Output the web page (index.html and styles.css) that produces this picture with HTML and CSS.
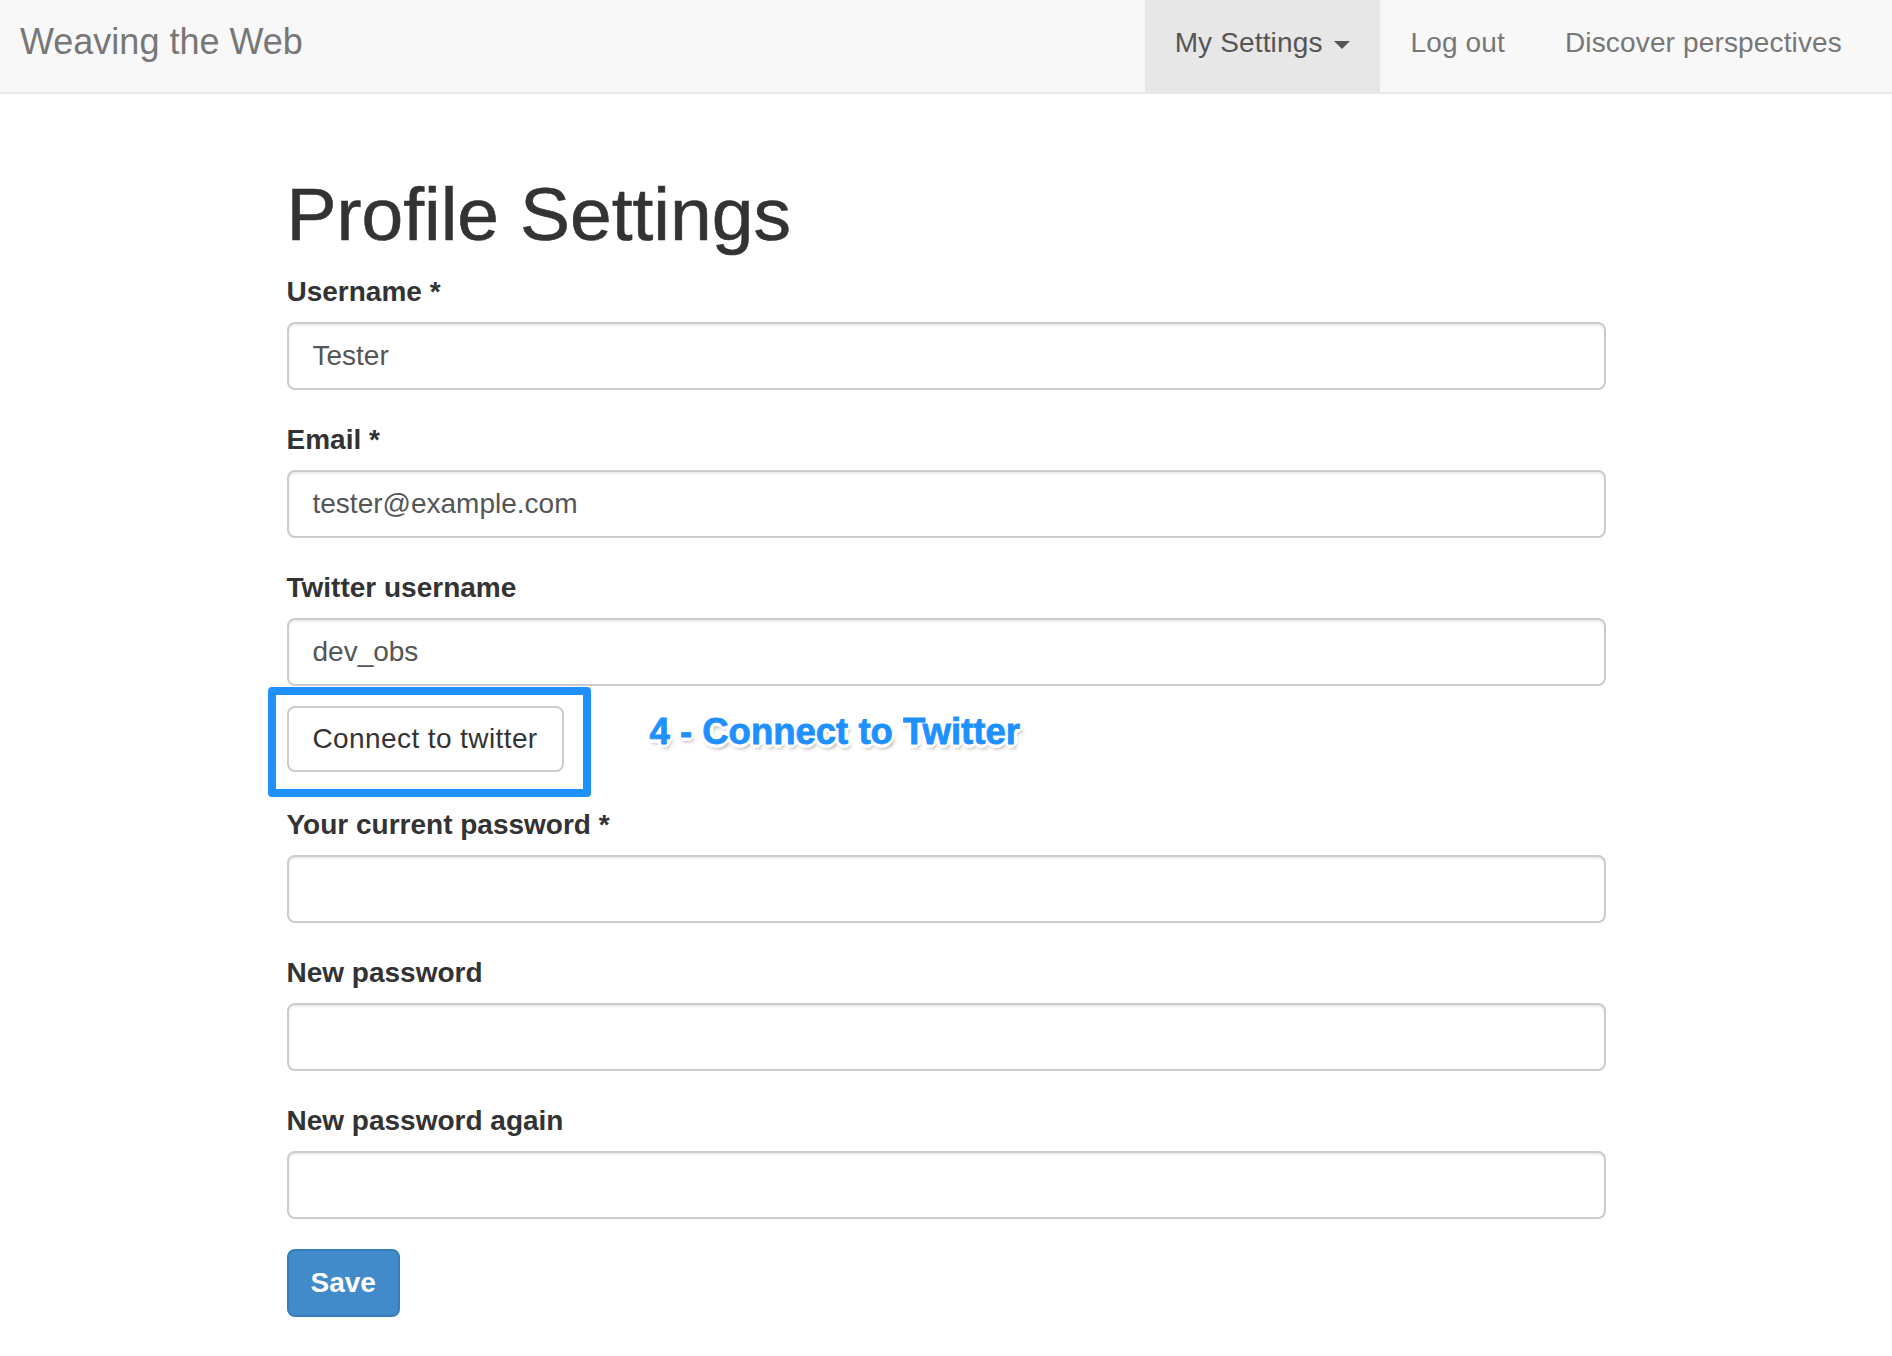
FILE: index.html
```html
<!DOCTYPE html>
<html lang="en">
<head>
<meta charset="utf-8">
<title>Profile Settings</title>
<link rel="stylesheet" href="styles.css">
</head>
<body>
<nav class="navbar">
  <a class="brand" href="#">Weaving the Web</a>
  <ul class="nav">
    <li class="active"><a href="#">My Settings <span class="caret"></span></a></li>
    <li><a href="#">Log out</a></li>
    <li><a href="#">Discover perspectives</a></li>
  </ul>
</nav>
<main class="container">
  <h1 class="title">Profile Settings</h1>
  <form class="form">
    <div class="form-group">
      <label class="label">Username *</label>
      <input class="form-control" type="text" value="Tester">
    </div>
    <div class="form-group">
      <label class="label">Email *</label>
      <input class="form-control" type="text" value="tester@example.com">
    </div>
    <div class="form-group">
      <label class="label">Twitter username</label>
      <input class="form-control" type="text" value="dev_obs">
      <div class="connect-row">
        <button type="button" class="btn btn-default">Connect to twitter</button>
        <div class="highlight"></div>
        <div class="annotation">4 - Connect to Twitter</div>
      </div>
    </div>
    <div class="form-group">
      <label class="label">Your current password *</label>
      <input class="form-control" type="password">
    </div>
    <div class="form-group">
      <label class="label">New password</label>
      <input class="form-control" type="password">
    </div>
    <div class="form-group">
      <label class="label">New password again</label>
      <input class="form-control" type="password">
    </div>
    <button type="button" class="btn btn-primary">Save</button>
  </form>
</main>
</body>
</html>
```
FILE: styles.css
```css
* { box-sizing: border-box; }

body {
  margin: 0;
  font-family: "Liberation Sans", Arial, Helvetica, sans-serif;
  color: #333;
  background: #fff;
}

.navbar {
  display: flex;
  align-items: stretch;
  justify-content: space-between;
  height: 94px;
  background: #f8f8f8;
  border-bottom: 2px solid #e7e7e7;
  padding: 0 20px 0 20px;
}

.brand {
  display: flex;
  align-items: center;
  padding-bottom: 8px;
  font-size: 36px;
  color: #777;
  text-decoration: none;
}

.nav {
  display: flex;
  list-style: none;
  margin: 0;
  padding: 0;
}

.nav li a {
  display: block;
  height: 92px;
  padding: 23px 30px 29px;
  font-size: 28px;
  line-height: 40px;
  letter-spacing: 0.15px;
  color: #777;
  text-decoration: none;
}

.nav li.active a {
  background: #e7e7e7;
  color: #555;
}

.caret {
  display: inline-block;
  width: 0;
  height: 0;
  margin-left: 4px;
  vertical-align: middle;
  border-top: 8px solid #555;
  border-left: 8px solid transparent;
  border-right: 8px solid transparent;
}

.container {
  max-width: 1319px;
  margin: 0 auto;
  padding-top: 40px;
}

.title {
  margin: 40px 0 18px;
  font-size: 75px;
  font-weight: normal;
  line-height: 80px;
  color: #333;
  -webkit-text-stroke: 0.6px #333;
}

.form-group {
  margin-bottom: 30px;
}

.label {
  display: block;
  margin-bottom: 10px;
  font-size: 28px;
  line-height: 40px;
  font-weight: bold;
  color: #333;
}

.form-control {
  display: block;
  width: 100%;
  height: 68px;
  padding: 12px 24px;
  font-family: inherit;
  font-size: 28px;
  line-height: 40px;
  color: #555;
  background: #fff;
  border: 2px solid #ccc;
  border-radius: 8px;
  box-shadow: inset 0 2px 2px rgba(0, 0, 0, 0.075);
  outline: none;
}

.connect-row {
  position: relative;
  margin-top: 20px;
  padding-bottom: 3px;
}

.btn {
  display: inline-block;
  height: 68px;
  padding: 12px 24px;
  font-family: inherit;
  font-size: 28px;
  line-height: 40px;
  border: 2px solid transparent;
  border-radius: 8px;
  cursor: pointer;
}

.btn-default {
  background: #fff;
  border-color: #ccc;
  color: #333;
  height: 66px;
  padding: 11px 24px;
  letter-spacing: 0.4px;
}

.btn-primary {
  background: #428bca;
  border-color: #357ebd;
  color: #fff;
  font-weight: bold;
  padding: 12px 22px;
}

.highlight {
  position: absolute;
  left: -19px;
  top: -19px;
  width: 323px;
  height: 110px;
  border: 8px solid #1e90ff;
  border-radius: 4px;
  pointer-events: none;
}

.annotation {
  position: absolute;
  left: 363px;
  top: 6px;
  font-size: 36.5px;
  line-height: 40px;
  font-weight: bold;
  color: #1e90ff;
  white-space: nowrap;
  -webkit-text-stroke: 0.8px #1e90ff;
  text-shadow:
    3px 0 0 #fff, -3px 0 0 #fff, 0 3px 0 #fff, 0 -3px 0 #fff,
    2px 2px 0 #fff, -2px 2px 0 #fff, 2px -2px 0 #fff, -2px -2px 0 #fff,
    3px 1px 0 #fff, -3px 1px 0 #fff, 3px -1px 0 #fff, -3px -1px 0 #fff,
    1px 3px 0 #fff, -1px 3px 0 #fff, 1px -3px 0 #fff, -1px -3px 0 #fff,
    4px 0 0 #fff, -4px 0 0 #fff, 0 4px 0 #fff, 0 -4px 0 #fff,
    2px 4px 4px rgba(0, 0, 0, 0.45);
}
```
